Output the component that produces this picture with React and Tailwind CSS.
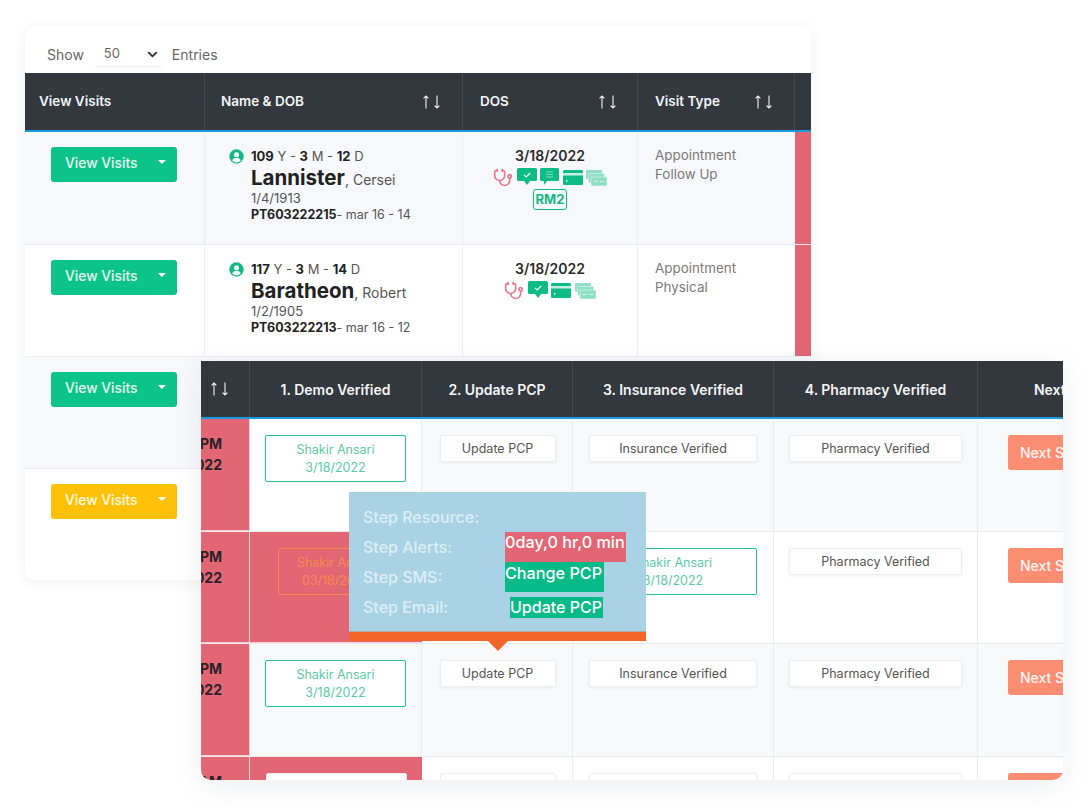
import React from 'react';
import { ChevronDown, Stethoscope } from 'lucide-react';

const SortArrows = ({ className = '' }) => (
  <svg width="19" height="14" viewBox="0 0 19 14" fill="none" stroke="currentColor" strokeWidth="1.1" className={`text-gray-100 ${className}`}>
    <path d="M4 13.500V1M1.600 3.400 4 1l2.400 2.400" />
    <path d="M15 .5V13M12.600 10.600 15 13l2.400-2.400" />
  </svg>
);

const PersonIcon = () => (
  <svg width="15" height="15" viewBox="0 0 15 15" className="shrink-0">
    <circle cx="7.5" cy="7.5" r="7.2" fill="#14b886" />
    <circle cx="7.5" cy="5.7" r="2.5" fill="#fff" />
    <path d="M3.2 11.6c.7-2 2.3-2.8 4.3-2.8s3.600.8 4.300 2.800c-1 1.100-2.600 1.800-4.300 1.800s-3.300-.7-4.300-1.800z" fill="#fff" />
  </svg>
);

const ChatCheck = () => (
  <svg width="20" height="18" viewBox="0 0 20 18">
    <path d="M1.500 0h17A1.500 1.500 0 0 1 20 1.500v10a1.500 1.500 0 0 1-1.500 1.500H13l-3 4-3-4H1.500A1.500 1.500 0 0 1 0 11.500v-10A1.500 1.500 0 0 1 1.500 0z" fill="#0dbb85" />
    <path d="m7 6.800 2.200 2.200 4-4" fill="none" stroke="#fff" strokeWidth="1.200" />
  </svg>
);

const ChatLines = () => (
  <svg width="19" height="18" viewBox="0 0 19 18">
    <path d="M1.500 0h16A1.500 1.500 0 0 1 19 1.500v10a1.500 1.500 0 0 1-1.500 1.500H7l-3 4v-4H1.500A1.500 1.500 0 0 1 0 11.500v-10A1.500 1.500 0 0 1 1.500 0z" fill="#0dbb85" />
    <path d="M6 4h7M6 6.500h7M6 9h7" stroke="#7fdcbf" strokeWidth="1" />
  </svg>
);

const CardIcon = () => (
  <svg width="20" height="15" viewBox="0 0 20 15" className="mt-[2px]">
    <rect width="20" height="15" rx="1.500" fill="#0dbb85" />
    <rect y="3" width="20" height="2.500" fill="#c8f0e2" />
    <path d="m3 10 1.500 1-1.500 1" fill="none" stroke="#fff" strokeWidth=".8" />
  </svg>
);

const CashIcon = () => (
  <svg width="21" height="16" viewBox="0 0 21 16" fill="#8fdfc5" className="mt-[2px]">
    <rect width="16" height="9" rx="1" />
    <rect x="2.500" y="3.500" width="16" height="9" rx="1" stroke="#d8f5ea" strokeWidth=".7" />
    <rect x="5" y="7" width="16" height="9" rx="1" stroke="#d8f5ea" strokeWidth=".7" />
    <path d="M7.500 11.500h4M14 11.500h4" stroke="#d8f5ea" strokeWidth="1" />
  </svg>
);

const Stetho = () => <Stethoscope size={20} strokeWidth={2} className="text-[#e8788a]" />;

const ViewVisits = ({ yellow }) => (
  <div className="pt-[15px] pl-[26px]">
    <button className={`flex items-center justify-between w-[126px] h-[35px] pl-[14px] pr-[11px] pb-[3px] rounded-[3px] text-[13.800px] font-medium text-white/90 ${yellow ? 'bg-[#ffc107]' : 'bg-[#0cc389]'}`}>
      View Visits
      <span className="w-0 h-0 border-x-[4px] border-x-transparent border-t-[4px] border-t-white mb-[2px]" />
    </button>
  </div>
);

const backRows = [
  {
    age: ['109', '3', '12'], last: 'Lannister', first: 'Cersei', dob: '1/4/1913', id: 'PT603222215', tail: 'mar 16 - 14',
    icons: [<Stetho key="a" />, <ChatCheck key="b" />, <ChatLines key="c" />, <CardIcon key="d" />, <CashIcon key="e" />],
    rm: true, type: 'Follow Up', bg: 'bg-[#f7f8fb]', h: 'h-[113px]',
  },
  {
    age: ['117', '3', '14'], last: 'Baratheon', first: 'Robert', dob: '1/2/1905', id: 'PT603222213', tail: 'mar 16 - 12',
    icons: [<Stetho key="a" />, <ChatCheck key="b" />, <CardIcon key="d" />, <CashIcon key="e" />],
    type: 'Physical', bg: 'bg-white', h: 'h-[112px]',
  },
];

const BackCard = () => (
  <div className="w-[786px] h-[554px] rounded-[10px] bg-white overflow-hidden shadow-[0_2px_14px_rgba(30,40,60,0.07)]">
    <div className="h-[47px] flex items-center pl-[22px] pt-[9px] text-[14px] text-[#666]">
      <span>Show</span>
      <div className="w-[67px] ml-[11px] h-[26px] pl-[9px] pr-[2px] pt-[1px] flex items-center justify-between border-b border-[#f1f1f1] text-[13px]">
        50
        <ChevronDown size={15} strokeWidth={3} className="text-[#333]" />
      </div>
      <span className="ml-[10px]">Entries</span>
    </div>

    <div className="grid grid-cols-[180px_258px_175px_157px_16px] h-[59px] bg-[#33383e] border-b-2 border-[#1d9be0] text-[13.500px] font-semibold text-gray-100">
      <div className="flex items-center pl-[14px] border-r border-[#454a50]">View Visits</div>
      <div className="flex items-center justify-between pl-[16px] pr-[21px] border-r border-[#454a50]">Name &amp; DOB <SortArrows /></div>
      <div className="flex items-center justify-between pl-[17px] pr-[20px] border-r border-[#454a50]">DOS <SortArrows /></div>
      <div className="flex items-center justify-between pl-[17px] pr-[21px] border-r border-[#454a50]">Visit Type <SortArrows /></div>
      <div />
    </div>

    {backRows.map((row) => (
      <div key={row.last} className={`grid grid-cols-[180px_258px_175px_157px_16px] border-b border-[#eceef2] ${row.h} ${row.bg}`}>
        <div className="border-r border-[#eceef2]"><ViewVisits /></div>
        <div className="border-r border-[#eceef2] pl-[24px] pt-[16px] text-[#555]">
          <div className="flex items-center gap-[7px] text-[13px] leading-[16px]">
            <PersonIcon />
            <span><b className="text-[#222]">{row.age[0]}</b> Y - <b className="text-[#222]">{row.age[1]}</b> M - <b className="text-[#222]">{row.age[2]}</b> D</span>
          </div>
          <div className="ml-[22px]">
            <div className="leading-[28px] text-[14px]"><b className="text-[20.500px] text-[#222]">{row.last}</b>, {row.first}</div>
            <div className="-mt-[3px] text-[13px] leading-[15px]">{row.dob}</div>
            <div className="text-[12.500px] leading-[17px] whitespace-nowrap"><b className="text-[#222]">{row.id}</b>- {row.tail}</div>
          </div>
        </div>
        <div className="border-r border-[#eceef2] pt-[15px] flex flex-col items-center">
          <div className="text-[14px] leading-[18px] font-semibold text-[#2b2b2b]">3/18/2022</div>
          <div className="flex items-start gap-[3.500px] h-[20px] mt-[3px]">{row.icons}</div>
          {row.rm && <div className="mt-[1px] px-[2px] h-[21px] leading-[19px] border border-[#14b886] rounded-[3px] text-[13px] font-bold text-[#14b886]">RM2</div>}
        </div>
        <div className="pl-[17px] pt-[14px] text-[13.400px] leading-[19px] text-[#7a7a7a]">
          <div>Appointment</div>
          <div>{row.type}</div>
        </div>
        <div className="bg-[#e36675]" />
      </div>
    ))}

    <div className="h-[112px] bg-[#f7f8fb] border-b border-[#eceef2]"><ViewVisits /></div>
    <div className="h-[111px] bg-white"><ViewVisits yellow /></div>
  </div>
);

const WhiteBtn = ({ label, w }) => (
  <div className={`${w} h-[27px] mx-auto pt-[2px] flex items-center justify-center bg-white rounded-[2px] border border-[#eceef1] shadow-[0_1px_3px_rgba(0,0,0,0.06)] text-[12.500px] text-[#555] whitespace-nowrap`}>
    {label}
  </div>
);

const DoneBtn = ({ w = 'w-[141px]', date = '3/18/2022', orange }) => (
  <div className={`${w} h-[47px] mx-auto flex flex-col items-center justify-center rounded-[2px] border text-[12.500px] leading-[18px] whitespace-nowrap overflow-hidden ${orange ? 'border-[#f5894f] text-[#f58a4d]' : 'border-[#27c08f] text-[#5cc9a5] bg-white'}`}>
    <span>Shakir Ansari</span>
    <span>{date}</span>
  </div>
);

const frontCols = 'grid grid-cols-[49px_172px_151px_201px_204px_184px]';
const line = 'border-r border-[#eaecf0]';

const FrontRow = ({ h, bg, redDemo, insuranceDone, demoPlain, clipped, whiteDemo }) => (
  <div className={`${frontCols} ${h} ${bg} border-b border-[#e9ebef]`}>
    <div className="bg-[#e36675] border-r border-b border-white/70 overflow-hidden pt-[14px] pr-[27px] flex flex-col items-end text-[14px] font-bold leading-[21px] text-[#2a2228] whitespace-nowrap">
      {!clipped && <span>5:30 PM</span>}
      {!clipped && <span>3/18/2022</span>}
      {clipped && <span>5:30 AM</span>}
    </div>
    <div className={`${redDemo ? 'bg-[#e36675] border-b border-white/70' : line} ${whiteDemo ? 'bg-white' : ''} pt-[16px]`}>
      {demoPlain ? <WhiteBtn label="" w="w-[141px]" /> : <DoneBtn w={redDemo ? 'w-[116px]' : 'w-[141px]'} date={redDemo ? '03/18/2022' : '3/18/2022'} orange={redDemo} />}
    </div>
    <div className={`${line} pt-[16px] pl-[1px]`}><WhiteBtn label="Update PCP" w="w-[116px]" /></div>
    <div className={`${line} pt-[16px]`}>
      {insuranceDone ? <DoneBtn w="w-[168px]" /> : <WhiteBtn label="Insurance Verified" w="w-[168px]" />}
    </div>
    <div className={`${line} pt-[16px]`}><WhiteBtn label="Pharmacy Verified" w="w-[173px]" /></div>
    <div className="pt-[16px] pl-[30px]">
      <div className="w-[120px] h-[35px] pl-[12px] pb-[1px] flex items-center rounded-[3px] bg-[#fb8d72] text-[14px] font-medium text-white/90">Next Step</div>
    </div>
  </div>
);

const Tooltip = () => (
  <div className="absolute left-[148px] top-[131px] w-[297px] z-10">
    <div className="h-[140px] bg-[#a9d3e5] border-b border-[#a9a9a0] pl-[14px] pt-[10px] text-[16px] font-medium text-[#dceef5]">
      <div className="h-[30px] leading-[30px]">Step Resource:</div>
      <div className="h-[30px] flex">
        <span className="w-[142px] leading-[30px]">Step Alerts:</span>
        <span className="w-[121px] h-[30px] bg-[#e36675] text-[16.200px] leading-[20px] text-white whitespace-nowrap overflow-hidden">0day,0 hr,0 min</span>
      </div>
      <div className="h-[30px] flex">
        <span className="w-[142px] leading-[30px]">Step SMS:</span>
        <span className="w-[99px] h-[30px] bg-[#06bb88] text-[16.200px] leading-[22px] text-white whitespace-nowrap overflow-hidden">Change PCP</span>
      </div>
      <div className="h-[30px] flex">
        <span className="w-[147px] leading-[30px]">Step Email:</span>
        <span className="w-[93px] h-[21px] mt-[5px] bg-[#06bb88] text-[16px] leading-[21px] text-white whitespace-nowrap overflow-hidden">Update PCP</span>
      </div>
    </div>
    <div className="h-[9px] bg-[#f4652a]" />
    <div className="mx-auto w-0 h-0 border-x-[10px] border-x-transparent border-t-[10px] border-t-[#f4652a]" />
  </div>
);

const FrontCard = () => (
  <div className="absolute left-[201px] top-[361px] w-[862px] h-[419px] rounded-b-[10px] bg-white shadow-[0_6px_30px_rgba(30,40,60,0.08)]">
    <div className="w-full h-full overflow-hidden rounded-b-[10px]">
      <div className={`${frontCols} h-[58px] bg-[#33383e] border-b-2 border-[#1d9be0] text-[14px] font-semibold text-gray-100 text-center`}>
        <div className="flex items-center pl-[9px] border-r border-[#454a50]"><SortArrows /></div>
        <div className="flex items-center justify-center border-r border-[#454a50]">1. Demo Verified</div>
        <div className="flex items-center justify-center border-r border-[#454a50]">2. Update PCP</div>
        <div className="flex items-center justify-center border-r border-[#454a50]">3. Insurance Verified</div>
        <div className="flex items-center justify-center border-r border-[#454a50]">4. Pharmacy Verified</div>
        <div className="flex items-center justify-center pr-[6px]">Next Step</div>
      </div>
      <FrontRow h="h-[113px]" bg="bg-[#f8f9fb]" whiteDemo />
      <FrontRow h="h-[112px]" bg="bg-white" redDemo insuranceDone />
      <FrontRow h="h-[113px]" bg="bg-[#f8f9fb]" />
      <FrontRow h="h-[113px]" bg="bg-white" redDemo demoPlain clipped />
    </div>
    <Tooltip />
  </div>
);

export default function App() {
  return (
    <div className="relative w-[1088px] h-[805px] overflow-hidden bg-white pt-[26px] pl-[25px] font-[family-name:Inter,sans-serif]">
      <BackCard />
      <FrontCard />
    </div>
  );
}
